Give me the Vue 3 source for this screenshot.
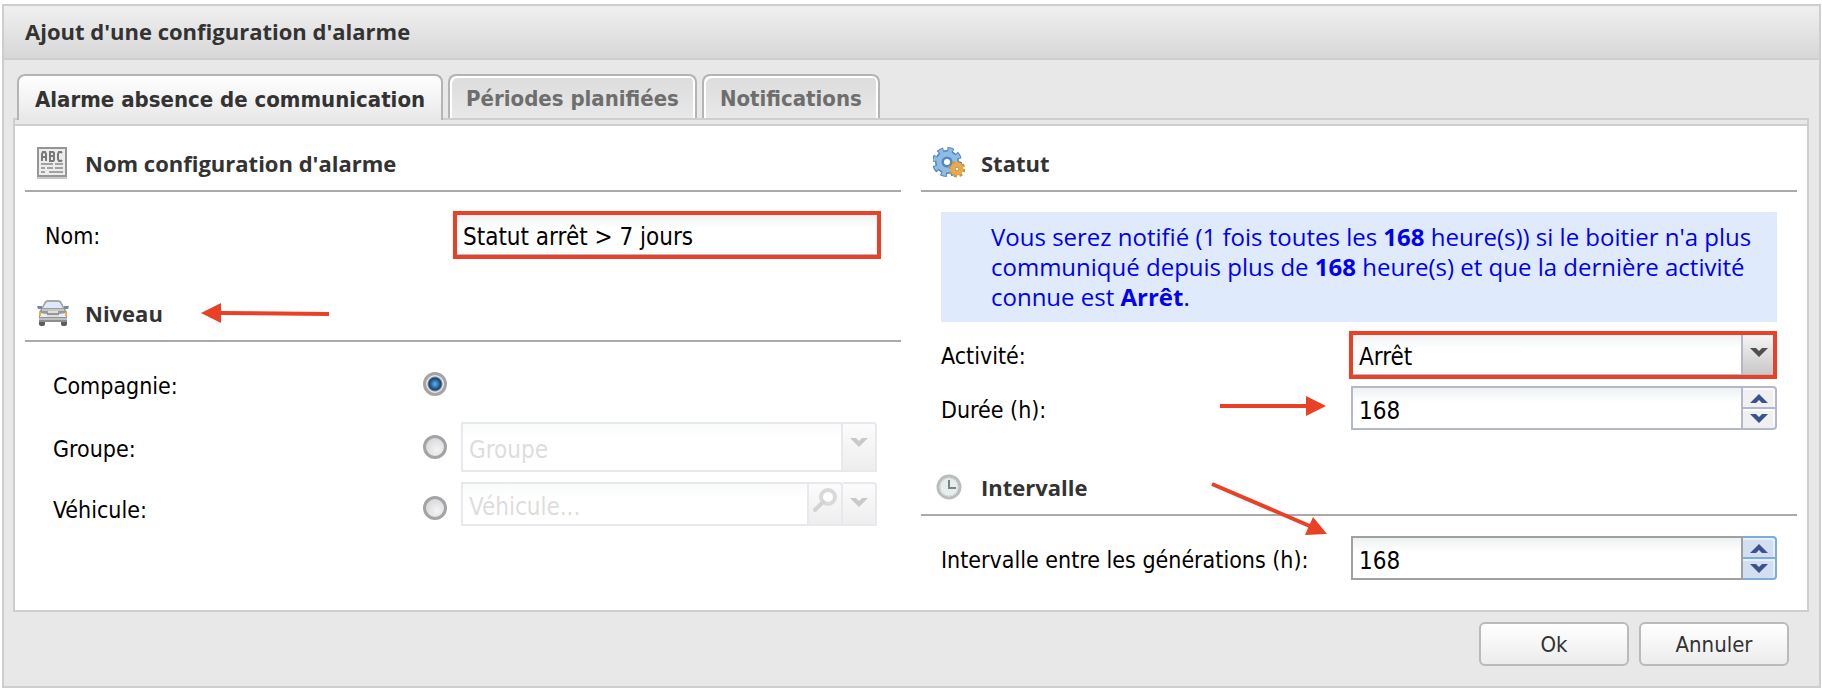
<script setup>
import { ref } from 'vue';

const activeTab = ref(0);
const tabs = ['Alarme absence de communication', 'Périodes planifiées', 'Notifications'];

const nom = ref('Statut arrêt > 7 jours');
const niveau = ref('compagnie');
const activite = ref('Arrêt');
const duree = ref(168);
const intervalle = ref(168);

function stepDuree(n) {
  duree.value = Math.max(0, duree.value + n);
}

function stepIntervalle(n) {
  intervalle.value = Math.max(0, intervalle.value + n);
}
</script>

<template>
  <div class="window">
    <h1 class="window-title">Ajout d'une configuration d'alarme</h1>

    <div class="window-body">
      <div class="tabs" role="tablist">
        <button
          v-for="(tab, i) in tabs"
          :key="tab"
          class="tab"
          :class="{ active: activeTab === i }"
          type="button"
          role="tab"
          :aria-selected="activeTab === i"
          @click="activeTab = i"
        >{{ tab }}</button>
      </div>
      <div class="tab-strip"></div>

      <form class="panel" @submit.prevent>
        <div class="column">
          <h2 class="section-title">
            <span class="icon">
              <svg width="32" height="32" viewBox="0 0 32 32">
                <rect x="1" y="1" width="28" height="28" fill="#ececec" stroke="#969696" stroke-width="2" />
                <path d="M0 31h30" stroke="#c8c8c8" stroke-width="2" />
                <path d="M5 14V7l1-2h2l1 2v7M5 10h4M13 5v9M12 5h4l1 1v2l-1 1h-3M16 9l1 1v3l-1 1h-4M25 6l-1-1h-2l-1 2v5l1 2h2l1-1" fill="none" stroke="#787878" stroke-width="2" />
                <path d="M4 17h12M18 17h8M4 21h4M10 21h6M18 21h8M4 25h4M12 25h14" stroke="#a2a2a2" stroke-width="2" />
              </svg>
            </span>
            Nom configuration d'alarme
          </h2>
          <div class="section-body">
            <div class="row">
              <label class="label" for="nom">Nom:</label>
              <div class="field marked">
                <input id="nom" v-model="nom" class="input" type="text" />
              </div>
            </div>
          </div>

          <h2 class="section-title">
            <span class="icon">
              <svg width="32" height="32" viewBox="0 0 32 32">
                <defs>
                  <linearGradient id="car" x1="0" y1="0" x2="0" y2="1">
                    <stop offset="0" stop-color="#a8a8a8" />
                    <stop offset="1" stop-color="#8c8c8c" />
                  </linearGradient>
                </defs>
                <rect x="2" y="22" width="6" height="7" rx="2" fill="#5c5c5c" />
                <rect x="24" y="22" width="6" height="7" rx="2" fill="#5c5c5c" />
                <path d="M7 6Q8 3 11 3h10q3 0 4 3l3 6q2 2 2 4v9H2v-9q0-2 2-4z" fill="url(#car)" />
                <path d="M9 6q1-1 2-1h10q1 0 2 1l3 5H6z" fill="#dce9fa" />
                <path d="M0 9h5v3H1zM32 9h-5v3h4z" fill="#7d8790" />
                <path d="M5 13h22" stroke="#c4c4c4" stroke-width="2" />
                <path d="M3 16l7 1v3H3zM29 16l-7 1v3h7z" fill="#e4eefa" />
                <path d="M2 15h2v4H2zM28 15h2v4h-2z" fill="#f5a54a" />
                <path d="M11 15h10M10 19h12" stroke="#dedede" stroke-width="2" />
                <path d="M2 22h28" stroke="#bebebe" stroke-width="2" />
              </svg>
            </span>
            Niveau
            <svg class="arrow-left" width="128" height="20" viewBox="0 0 128 20">
              <path d="M19 10l109 1" stroke="#ea4025" stroke-width="4" />
              <path d="M0 10L20 0v20z" fill="#ea4025" />
            </svg>
          </h2>
          <div class="section-body levels">
            <div class="row">
              <label class="label" for="compagnie">Compagnie:</label>
              <input id="compagnie" v-model="niveau" class="radio" type="radio" name="niveau" value="compagnie" />
            </div>
            <div class="row row-groupe">
              <label class="label" for="groupe">Groupe:</label>
              <input id="groupe" v-model="niveau" class="radio" type="radio" name="niveau" value="groupe" />
              <div class="field disabled">
                <select class="input" aria-label="Groupe" disabled>
                  <option>Groupe</option>
                </select>
                <span class="trigger">
                  <svg width="20" height="12" viewBox="0 0 20 12"><path d="M1 1h6l3 3 3-3h6l-9 9z" fill="#505050" /></svg>
                </span>
              </div>
            </div>
            <div class="row row-vehicule">
              <label class="label" for="vehicule">Véhicule:</label>
              <input id="vehicule" v-model="niveau" class="radio" type="radio" name="niveau" value="vehicule" />
              <div class="field disabled">
                <input class="input" type="text" placeholder="Véhicule..." aria-label="Véhicule" disabled />
                <button class="trigger" type="button" aria-label="Rechercher" disabled>
                  <svg width="26" height="26" viewBox="0 0 26 26">
                    <circle cx="16" cy="9" r="7" fill="#fff" stroke="#858585" stroke-width="4" />
                    <path d="M11 14l-8 8" stroke="#707070" stroke-width="4" stroke-linecap="round" />
                  </svg>
                </button>
                <button class="trigger" type="button" aria-label="Ouvrir la liste" disabled>
                  <svg width="20" height="12" viewBox="0 0 20 12"><path d="M1 1h6l3 3 3-3h6l-9 9z" fill="#505050" /></svg>
                </button>
              </div>
            </div>
          </div>
        </div>

        <div class="column">
          <h2 class="section-title">
            <span class="icon">
              <svg width="32" height="32" viewBox="0 0 32 32">
                <circle cx="14" cy="15" r="12.5" fill="none" stroke="#4a80b6" stroke-width="5" stroke-dasharray="6 3.82" />
                <circle cx="14" cy="15" r="7.5" fill="#fff" stroke="#5288bf" stroke-width="9" />
                <circle cx="14" cy="15" r="8" fill="none" stroke="#8fbce6" stroke-width="5" />
                <circle cx="14" cy="15" r="12" fill="none" stroke="#8fbce6" stroke-width="4" stroke-dasharray="4 5.42" stroke-dashoffset="-1" />
                <circle cx="24" cy="22" r="7" fill="none" stroke="#cf9440" stroke-width="3" stroke-dasharray="3 2.5" />
                <circle cx="24" cy="22" r="4.5" fill="#f6ead0" stroke="#eaa944" stroke-width="4" />
                <circle cx="24" cy="22" r="2" fill="#fff3d8" stroke="#b67a2c" />
              </svg>
            </span>
            Statut
          </h2>
          <div class="section-body">
            <p class="notice">
              Vous serez notifié (1 fois toutes les <b>{{ intervalle }}</b> heure(s)) si le boitier n'a plus
              communiqué depuis plus de <b>{{ duree }}</b> heure(s) et que la dernière activité connue est
              <b>{{ activite }}</b>.
            </p>
            <div class="row">
              <label class="label" for="activite">Activité:</label>
              <div class="field marked">
                <select id="activite" v-model="activite" class="input">
                  <option>Arrêt</option>
                </select>
                <span class="trigger">
                  <svg width="20" height="12" viewBox="0 0 20 12"><path d="M1 1h6l3 3 3-3h6l-9 9z" fill="#505050" /></svg>
                </span>
              </div>
            </div>
            <div class="row">
              <label class="label" for="duree">Durée (h):</label>
              <svg class="arrow-right" width="106" height="20" viewBox="0 0 106 20">
                <path d="M0 10h88" stroke="#ea4025" stroke-width="4" />
                <path d="M106 10L86 0v20z" fill="#ea4025" />
              </svg>
              <div class="field">
                <input id="duree" v-model.number="duree" class="input" type="number" />
                <div class="spinner">
                  <button type="button" aria-label="Augmenter" @click="stepDuree(1)">
                    <svg width="20" height="12" viewBox="0 0 20 12"><path d="M1 11h6l3-3 3 3h6l-9-9z" fill="#3b528c" /></svg>
                  </button>
                  <button type="button" aria-label="Diminuer" @click="stepDuree(-1)">
                    <svg width="20" height="12" viewBox="0 0 20 12"><path d="M1 1h6l3 3 3-3h6l-9 9z" fill="#3b528c" /></svg>
                  </button>
                </div>
              </div>
            </div>
          </div>

          <h2 class="section-title">
            <span class="icon">
              <svg width="32" height="32" viewBox="0 0 32 32">
                <circle cx="16" cy="16" r="11" fill="#e6eeed" stroke="#b9bdbc" stroke-width="3" />
                <circle cx="16" cy="16" r="9" fill="none" stroke="#d3dbda" />
                <path d="M16 9v8h7" fill="none" stroke="#7c8483" stroke-width="2" />
              </svg>
            </span>
            Intervalle
          </h2>
          <div class="section-body">
            <div class="row">
              <label class="label" for="intervalle">Intervalle entre les générations (h):</label>
              <svg class="arrow-down" width="118" height="54" viewBox="0 0 118 54">
                <path d="M1 2l100 43" stroke="#ea4025" stroke-width="4" />
                <path d="M116 52L94 53l8-18z" fill="#ea4025" />
              </svg>
              <div class="field hovered">
                <input id="intervalle" v-model.number="intervalle" class="input" type="number" />
                <div class="spinner">
                  <button type="button" aria-label="Augmenter" @click="stepIntervalle(1)">
                    <svg width="20" height="12" viewBox="0 0 20 12"><path d="M1 11h6l3-3 3 3h6l-9-9z" fill="#3b528c" /></svg>
                  </button>
                  <button type="button" aria-label="Diminuer" @click="stepIntervalle(-1)">
                    <svg width="20" height="12" viewBox="0 0 20 12"><path d="M1 1h6l3 3 3-3h6l-9 9z" fill="#3b528c" /></svg>
                  </button>
                </div>
              </div>
            </div>
          </div>
        </div>
      </form>

      <div class="footer">
        <button class="btn" type="button">Ok</button>
        <button class="btn" type="button">Annuler</button>
      </div>
    </div>
  </div>
</template>

<style>
body {
  background: #fff;
}
</style>

<style scoped>
* {
  box-sizing: border-box;
}

.window {
  margin: 4px 1px 0 2px;
  border: 2px solid #cecece;
  background: #e8e8e8;
  color: #000;
  font-family: Tahoma, "DejaVu Sans Condensed", "DejaVu Sans", sans-serif;
  font-size: 22px;
}

.window-title {
  margin: 0;
  padding: 0 21px;
  height: 54px;
  border-bottom: 2px solid #cecece;
  background: linear-gradient(#f0f0f0, #d7d7d7);
  color: #333;
  font: bold 22px/50px "Open Sans", sans-serif;
}

.window-body {
  padding: 14px 10px 20px 9px;
}

/* tabs */
.tabs {
  display: flex;
  gap: 5px;
  padding-left: 4px;
}

.tab {
  height: 44px;
  padding: 2px 16px 0;
  border: 2px solid #b4b4b4;
  border-bottom: 0;
  border-radius: 8px 8px 0 0;
  background: linear-gradient(#dcdcdc, #e8e8e8);
  box-shadow: inset 2px 2px #fff, inset -2px 0 #fff;
  color: #6e6e6e;
  font: inherit;
  font-weight: bold;
  cursor: pointer;
}

.tab.active {
  height: 46px;
  margin-bottom: -2px;
  position: relative;
  background: linear-gradient(#fff, #e8e8e8);
  box-shadow: none;
  color: #333;
}

.tab-strip {
  height: 6px;
  border: 2px solid #cecece;
  border-bottom: 0;
}

/* panel */
.panel {
  display: flex;
  padding-bottom: 10px;
  border: 2px solid #cecece;
  background: #fff;
}

.column {
  flex: 1;
  min-width: 0;
  padding: 0 10px;
}

.section-title {
  display: flex;
  align-items: center;
  height: 66px;
  margin: 0;
  padding: 21px 12px 11px;
  border-bottom: 2px solid #a9a9a9;
  color: #333;
  font: bold 22px/30px "Open Sans", sans-serif;
}

.icon {
  display: flex;
  width: 32px;
  margin-right: 16px;
}

.section-body {
  display: flex;
  flex-direction: column;
  gap: 10px;
  padding: 20px;
}

.row {
  display: flex;
  align-items: center;
  position: relative;
  min-height: 44px;
}

.label {
  flex: none;
  width: 410px;
  padding-top: 3px;
  font-size: 23px;
}

.levels {
  padding: 20px 24px 12px 28px;
}

.levels .label {
  width: 370px;
}

.row-groupe {
  height: 50px;
  margin-top: 6px;
}

.row-vehicule {
  height: 52px;
}

.row-vehicule .field {
  align-self: flex-start;
}

/* fields */
.field {
  display: flex;
  flex: 1;
  position: relative;
  min-width: 0;
  height: 44px;
}

.row-groupe .field {
  height: 50px;
}

.input {
  flex: 1;
  min-width: 0;
  margin: 0;
  padding: 6px 6px 0;
  border: 2px solid #b5b8c8;
  border-radius: 0;
  outline: 0;
  background: linear-gradient(#eef1f2, #fff 14px);
  color: #000;
  font: inherit;
  font-size: 24px;
  appearance: none;
}

.input[type="number"] {
  appearance: textfield;
}

.input::-webkit-inner-spin-button {
  appearance: none;
}

.marked::after {
  content: "";
  position: absolute;
  inset: -1px 0 -3px -2px;
  border: 4px solid #ea4025;
  pointer-events: none;
}

.trigger {
  display: flex;
  justify-content: center;
  width: 34px;
  margin: 0;
  padding: 13px 0 0;
  border: 2px solid #b5b8c8;
  border-left: 0;
  border-top-right-radius: 4px;
  background: linear-gradient(#f6f6f6, #c8c8c8);
  pointer-events: none;
}

button.trigger:nth-child(2) {
  padding-top: 4px;
}

.disabled {
  margin-left: 14px;
  opacity: 0.3;
}

.disabled .input {
  color: #909090;
  opacity: 1;
}

.disabled .input::placeholder {
  color: #909090;
}

.spinner {
  display: flex;
  flex-direction: column;
  width: 34px;
}

.spinner button {
  display: flex;
  flex: 1;
  align-items: center;
  justify-content: center;
  margin: 0;
  padding: 0;
  border: solid #b5b8c8;
  border-width: 2px 2px 0 0;
  background: #f0f0f2;
  box-shadow: inset -2px 2px #fafafa;
}

.spinner button:first-child {
  border-top-right-radius: 4px;
}

.spinner button:last-child {
  border-bottom-width: 2px;
  border-bottom-right-radius: 4px;
}

.hovered .input {
  border-color: #a0a0a0;
}

.hovered .spinner button {
  border-color: #7eadd9;
  background: #d3dff0;
  box-shadow: inset -2px 2px #e8effa;
}

/* radios */
.radio {
  flex: none;
  width: 24px;
  height: 24px;
  margin: 0;
  border: 3px solid #a4a4a4;
  border-radius: 50%;
  background: radial-gradient(circle at 60% 65%, #f4f4f4, #cfd1d6);
  appearance: none;
}

.radio:checked {
  background: radial-gradient(circle, #62b4e4 0, #2f7fba 3px, #1f3f66 6px, #e6e6e6 8px);
}

/* notice */
.notice {
  margin: 0;
  padding: 10px 20px 10px 50px;
  background: #dfeafd;
  color: #0000ee;
  font: 24px/30px "Open Sans", sans-serif;
}

/* red arrows */
.arrow-left {
  margin-left: 38px;
}

.arrow-right {
  position: absolute;
  top: 10px;
  left: 279px;
}

.arrow-down {
  position: absolute;
  top: -54px;
  left: 270px;
}

/* footer */
.footer {
  display: flex;
  justify-content: flex-end;
  gap: 10px;
  padding: 10px 20px 0 0;
}

.btn {
  width: 150px;
  height: 44px;
  padding: 0;
  border: 2px solid #bababa;
  border-radius: 6px;
  background: linear-gradient(#fff, #ececec);
  color: #333;
  font: inherit;
  cursor: pointer;
}
</style>
